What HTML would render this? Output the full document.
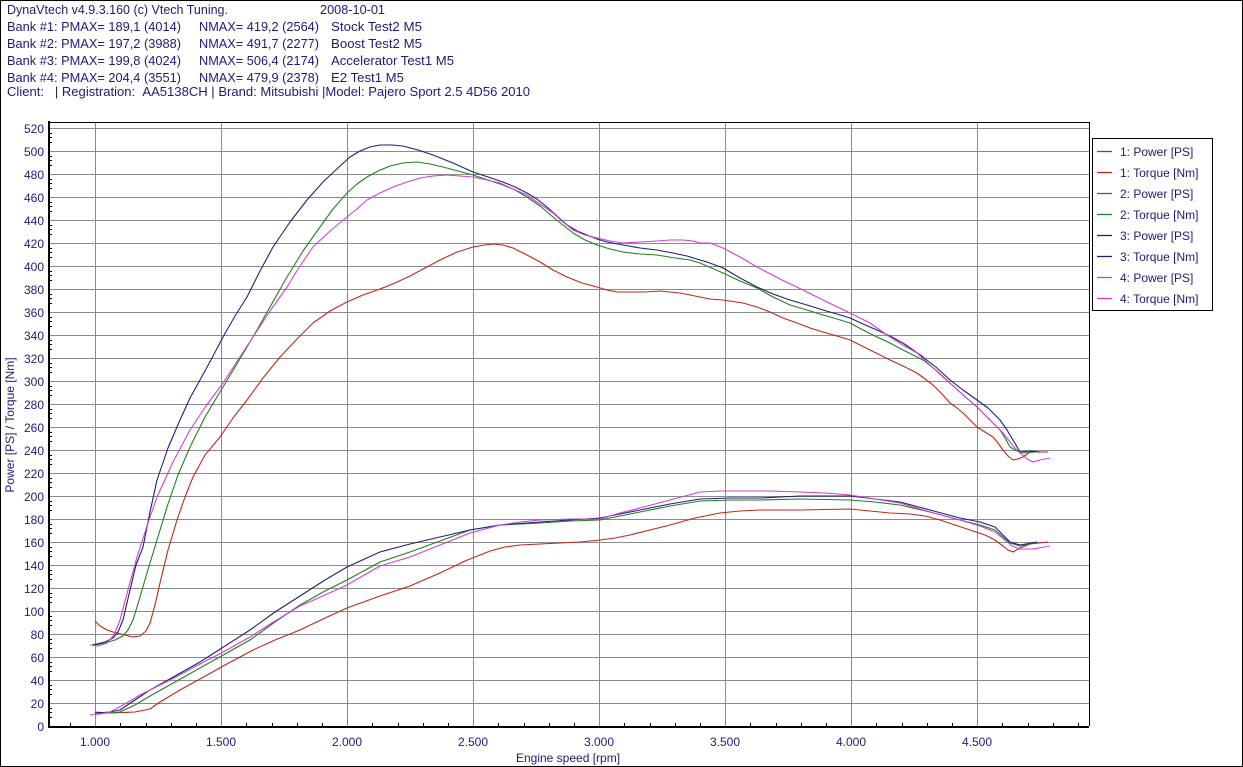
<!DOCTYPE html>
<html><head><meta charset="utf-8"><style>
html,body{margin:0;padding:0;background:#fff;}
svg{display:block;}
text{font-family:"Liberation Sans",Arial,sans-serif;fill:#1c1c78;font-size:12px;}
.h{font-size:13px;}
</style></head><body>
<svg width="1243" height="767" viewBox="0 0 1243 767" xmlns="http://www.w3.org/2000/svg">
<rect x="0.5" y="0.5" width="1242" height="766" fill="#fff" stroke="#000"/>
<g class="h">
<text class="h" x="7" y="14" textLength="221" lengthAdjust="spacingAndGlyphs">DynaVtech v4.9.3.160 (c) Vtech Tuning.</text>
<text class="h" x="320" y="14" textLength="65" lengthAdjust="spacingAndGlyphs">2008-10-01</text>
<text class="h" x="7" y="31" textLength="174" lengthAdjust="spacingAndGlyphs">Bank #1: PMAX= 189,1 (4014)</text><text class="h" x="199" y="31" textLength="120" lengthAdjust="spacingAndGlyphs">NMAX= 419,2 (2564)</text><text class="h" x="331" y="31" textLength="91" lengthAdjust="spacingAndGlyphs">Stock Test2 M5</text>
<text class="h" x="7" y="48" textLength="174" lengthAdjust="spacingAndGlyphs">Bank #2: PMAX= 197,2 (3988)</text><text class="h" x="199" y="48" textLength="120" lengthAdjust="spacingAndGlyphs">NMAX= 491,7 (2277)</text><text class="h" x="331" y="48" textLength="91" lengthAdjust="spacingAndGlyphs">Boost Test2 M5</text>
<text class="h" x="7" y="65" textLength="174" lengthAdjust="spacingAndGlyphs">Bank #3: PMAX= 199,8 (4024)</text><text class="h" x="199" y="65" textLength="120" lengthAdjust="spacingAndGlyphs">NMAX= 506,4 (2174)</text><text class="h" x="331" y="65" textLength="123" lengthAdjust="spacingAndGlyphs">Accelerator Test1 M5</text>
<text class="h" x="7" y="82" textLength="174" lengthAdjust="spacingAndGlyphs">Bank #4: PMAX= 204,4 (3551)</text><text class="h" x="199" y="82" textLength="120" lengthAdjust="spacingAndGlyphs">NMAX= 479,9 (2378)</text><text class="h" x="331" y="82" textLength="73" lengthAdjust="spacingAndGlyphs">E2 Test1 M5</text>
<text class="h" x="7" y="96" textLength="523" lengthAdjust="spacingAndGlyphs">Client:&#160;&#160;&#160;| Registration:&#160;&#160;AA5138CH | Brand: Mitsubishi |Model: Pajero Sport 2.5 4D56 2010</text>
</g>
<g stroke="#8a8a8a" stroke-width="1">
<path d="M49 703.5H1089M49 680.5H1089M49 657.5H1089M49 634.5H1089M49 611.5H1089M49 588.5H1089M49 565.5H1089M49 542.5H1089M49 519.5H1089M49 496.5H1089M49 473.5H1089M49 450.5H1089M49 427.5H1089M49 404.5H1089M49 381.5H1089M49 358.5H1089M49 335.5H1089M49 312.5H1089M49 289.5H1089M49 266.5H1089M49 243.5H1089M49 220.5H1089M49 197.5H1089M49 174.5H1089M49 151.5H1089M49 128.5H1089"/>
<path d="M95.5 122V726M221.5 122V726M347.5 122V726M473.5 122V726M599.5 122V726M725.5 122V726M851.5 122V726M977.5 122V726"/>
</g>
<path d="M49 122.5H1089.5V726" fill="none" stroke="#000"/>
<path d="M49 121V727H1089" fill="none" stroke="#000" stroke-width="2"/>
<g font-size="12" text-anchor="end">
<text x="44" y="731">0</text><text x="44" y="708">20</text><text x="44" y="685">40</text><text x="44" y="662">60</text><text x="44" y="639">80</text><text x="44" y="616">100</text><text x="44" y="593">120</text><text x="44" y="570">140</text><text x="44" y="547">160</text><text x="44" y="524">180</text><text x="44" y="501">200</text><text x="44" y="478">220</text><text x="44" y="455">240</text><text x="44" y="432">260</text><text x="44" y="409">280</text><text x="44" y="386">300</text><text x="44" y="363">320</text><text x="44" y="340">340</text><text x="44" y="317">360</text><text x="44" y="294">380</text><text x="44" y="271">400</text><text x="44" y="248">420</text><text x="44" y="225">440</text><text x="44" y="202">460</text><text x="44" y="179">480</text><text x="44" y="156">500</text><text x="44" y="133">520</text>
</g>
<g text-anchor="middle">
<text x="95" y="746">1.000</text><text x="221" y="746">1.500</text><text x="347" y="746">2.000</text><text x="473" y="746">2.500</text><text x="599" y="746">3.000</text><text x="725" y="746">3.500</text><text x="851" y="746">4.000</text><text x="977" y="746">4.500</text>
<text x="568" y="762">Engine speed [rpm]</text>
<text transform="translate(14,425) rotate(-90)">Power [PS] / Torque [Nm]</text>
</g>
<g stroke="#000" stroke-width="1">
<path d="M49 717.5h3M49 712.5h3M49 708.5h3M49 694.5h3M49 689.5h3M49 685.5h3M49 671.5h3M49 666.5h3M49 662.5h3M49 648.5h3M49 643.5h3M49 639.5h3M49 625.5h3M49 620.5h3M49 616.5h3M49 602.5h3M49 597.5h3M49 593.5h3M49 579.5h3M49 574.5h3M49 570.5h3M49 556.5h3M49 551.5h3M49 547.5h3M49 533.5h3M49 528.5h3M49 524.5h3M49 510.5h3M49 505.5h3M49 501.5h3M49 487.5h3M49 482.5h3M49 478.5h3M49 464.5h3M49 459.5h3M49 455.5h3M49 441.5h3M49 436.5h3M49 432.5h3M49 418.5h3M49 413.5h3M49 409.5h3M49 395.5h3M49 390.5h3M49 386.5h3M49 372.5h3M49 367.5h3M49 363.5h3M49 349.5h3M49 344.5h3M49 340.5h3M49 326.5h3M49 321.5h3M49 317.5h3M49 303.5h3M49 298.5h3M49 294.5h3M49 280.5h3M49 275.5h3M49 271.5h3M49 257.5h3M49 252.5h3M49 248.5h3M49 234.5h3M49 229.5h3M49 225.5h3M49 211.5h3M49 206.5h3M49 202.5h3M49 188.5h3M49 183.5h3M49 179.5h3M49 165.5h3M49 160.5h3M49 156.5h3M49 142.5h3M49 137.5h3M49 133.5h3"/>
<path d="M70.5 727v-4M120.5 727v-4M146.5 727v-4M171.5 727v-4M196.5 727v-4M246.5 727v-4M272.5 727v-4M297.5 727v-4M322.5 727v-4M372.5 727v-4M398.5 727v-4M423.5 727v-4M448.5 727v-4M498.5 727v-4M524.5 727v-4M549.5 727v-4M574.5 727v-4M624.5 727v-4M650.5 727v-4M675.5 727v-4M700.5 727v-4M750.5 727v-4M776.5 727v-4M801.5 727v-4M826.5 727v-4M876.5 727v-4M902.5 727v-4M927.5 727v-4M952.5 727v-4M1002.5 727v-4M1028.5 727v-4M1053.5 727v-4M1078.5 727v-4"/>
</g>
<g fill="none" stroke-width="1.1" stroke-linejoin="round">
<polyline stroke="#c02818" points="95,621 100,626 107,630 113,632 125,635 133,637 140,636 146,631 150,623 155,605 160,583 168,550 177,520 185,497 193,477 205,455 220,437 233,418 247,400 263,378 280,357 297,339 313,323 330,311 347,302 363,295 380,289 395,283 410,276 425,268 440,260 457,252 473,247 485,245 493,244 503,245 513,248 527,255 540,262 553,270 567,277 582,283 597,287 607,290 617,292 630,292 645,292 660,291 670,292 680,293 690,295 700,297 710,299 723,300 743,303 757,307 770,312 783,318 797,323 810,328 823,332 837,336 850,340 860,345 870,350 880,355 890,360 903,366 917,373 925,379 933,385 942,394 950,403 957,408 963,413 970,420 977,427 985,432 993,437 998,443 1003,450 1008,456 1013,460 1018,459 1023,457 1030,452 1040,452 1048,452"/>
<polyline stroke="#208020" points="95,645 105,643 115,640 123,636 128,630 133,620 140,597 147,573 157,540 167,507 178,475 190,447 205,417 223,387 238,362 253,337 270,307 287,277 303,251 320,227 333,209 347,193 357,184 367,177 378,171 390,166 403,163 417,162 430,164 443,167 458,171 473,175 488,180 503,185 515,190 527,197 540,206 553,217 563,225 573,233 585,240 597,245 610,249 623,252 640,254 657,255 675,258 690,260 700,263 723,273 740,281 757,288 773,297 790,305 807,310 823,315 837,319 850,323 863,330 877,337 890,343 903,350 913,355 923,360 937,371 950,383 963,395 977,407 988,418 1000,430 1005,438 1010,447 1017,451 1023,453 1035,452"/>
<polyline stroke="#20207e" points="92,645 105,642 113,638 118,632 123,620 130,590 136,565 143,547 150,512 157,480 168,448 180,420 190,398 200,380 212,358 223,337 235,316 247,297 260,271 273,247 290,222 307,200 323,182 340,166 350,157 360,151 370,147 380,145 392,145 403,146 418,150 433,155 453,163 473,172 488,177 503,182 515,187 527,193 537,199 547,207 557,216 567,225 577,231 587,235 597,239 607,242 623,245 640,248 657,250 673,253 687,256 700,260 707,262 723,268 740,278 757,287 773,294 790,300 807,305 823,310 837,314 850,318 863,324 877,330 890,336 903,343 913,350 923,357 937,368 950,380 963,390 977,400 988,408 1000,420 1007,430 1013,440 1020,452 1030,451 1040,452"/>
<polyline stroke="#d040d0" points="90,645 98,646 107,643 114,635 120,620 128,590 137,557 147,526 157,497 173,462 190,430 206,406 223,383 238,360 253,337 270,311 287,287 300,266 313,247 330,231 347,217 357,209 367,200 380,193 393,187 407,182 420,178 433,176 447,175 460,176 473,177 487,180 500,183 513,189 527,195 540,204 553,213 563,222 573,230 585,235 597,238 610,241 623,243 640,242 657,241 670,240 683,240 693,241 700,243 710,243 723,248 740,257 757,267 780,279 803,290 827,302 850,313 870,323 890,337 903,345 917,353 930,365 943,377 960,392 977,407 990,420 1003,433 1013,446 1020,453 1027,459 1033,462 1040,460 1050,458"/>
<polyline stroke="#c02818" points="95,712 110,713 135,712 150,709 160,702 180,690 200,679 225,665 253,650 275,640 300,630 325,618 347,608 380,596 410,586 440,573 465,561 490,551 505,547 520,545 540,544 560,543 580,542 600,540 615,538 630,535 650,530 670,525 695,518 720,513 740,511 760,510 800,510 850,509 870,511 890,513 910,514 925,516 940,520 955,525 970,530 985,535 995,540 1003,546 1008,550 1013,552 1020,548 1030,544 1048,542"/>
<polyline stroke="#208020" points="95,713 110,713 120,712 135,705 150,696 175,682 200,668 225,654 250,640 275,622 300,605 325,591 347,580 380,562 410,552 440,541 470,530 500,525 540,523 570,521 600,520 620,516 640,512 670,506 700,501 730,500 760,500 800,499 850,500 875,502 900,505 930,512 960,520 980,525 995,530 1003,537 1010,543 1020,546 1035,543"/>
<polyline stroke="#20207e" points="95,713 110,712 120,710 135,700 150,690 175,676 200,662 225,646 250,630 275,612 300,596 325,580 347,567 380,552 410,544 440,537 470,530 500,525 540,522 570,520 600,518 620,514 640,510 670,504 700,499 730,498 760,498 800,496 850,496 875,499 900,502 930,510 960,518 980,522 995,527 1003,535 1010,542 1020,545 1037,542"/>
<polyline stroke="#d040d0" points="90,715 100,714 110,712 125,704 140,695 170,680 200,664 225,651 250,637 275,621 300,606 325,595 347,585 380,566 410,557 440,545 470,533 500,525 520,522 540,520 570,519 600,519 620,513 640,508 670,500 700,492 720,491 740,491 770,491 800,492 825,493 850,495 875,499 900,503 930,512 960,520 980,526 995,532 1005,540 1012,546 1020,549 1033,549 1050,546"/>
</g>
<rect x="1092.5" y="138.5" width="120" height="172" fill="#fff" stroke="#000"/>
<g stroke-width="1.3">
<path d="M1097 151.5h15" stroke="#c02818"/><path d="M1097 172.5h15" stroke="#c02818"/>
<path d="M1097 193.5h15" stroke="#208020"/><path d="M1097 214.5h15" stroke="#208020"/>
<path d="M1097 235.5h15" stroke="#20207e"/><path d="M1097 256.5h15" stroke="#20207e"/>
<path d="M1097 277.5h15" stroke="#d040d0"/><path d="M1097 298.5h15" stroke="#d040d0"/>
</g>
<g>
<text x="1120" y="156">1: Power [PS]</text><text x="1120" y="177">1: Torque [Nm]</text>
<text x="1120" y="198">2: Power [PS]</text><text x="1120" y="219">2: Torque [Nm]</text>
<text x="1120" y="240">3: Power [PS]</text><text x="1120" y="261">3: Torque [Nm]</text>
<text x="1120" y="282">4: Power [PS]</text><text x="1120" y="303">4: Torque [Nm]</text>
</g>
</svg>
</body></html>
